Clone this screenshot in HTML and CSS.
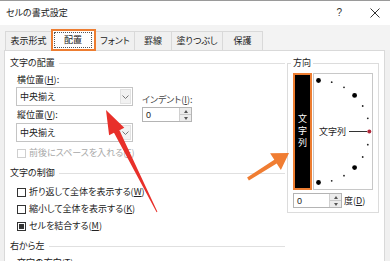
FILE: index.html
```html
<!DOCTYPE html>
<html lang="ja">
<head>
<meta charset="utf-8">
<title>セルの書式設定</title>
<link rel="stylesheet" href="styles.css">
</head>
<body>
<div class="dialog">
  <div class="titlebar">
    <span class="title">セルの書式設定</span>
    <div class="tb-btns">
      <span class="help">?</span>
      <svg class="close" width="10" height="10" viewBox="0 0 10 10"><path d="M0.5 0.5L9.5 9.5M9.5 0.5L0.5 9.5" stroke="#333" stroke-width="1" fill="none"/></svg>
    </div>
  </div>
  <div class="tabs">
    <div class="tab t1">表示形式</div>
    <div class="tab sel"><span class="focus">配置</span></div>
    <div class="tab t3">フォント</div>
    <div class="tab t4">罫線</div>
    <div class="tab t5">塗りつぶし</div>
    <div class="tab t6">保護</div>
  </div>
  <div class="panel">
    <div class="left">
      <div class="group-h g1"><span>文字の配置</span></div>
      <div class="align-row">
        <div class="combos">
          <div class="lbl">横位置(<u>H</u>):</div>
          <div class="combo c1"><span class="val">中央揃え</span><span class="dd"><svg width="7" height="4" viewBox="0 0 7 4"><path d="M0.5 0.5L3.5 3.5L6.5 0.5" stroke="#777" fill="none"/></svg></span></div>
          <div class="lbl l2">縦位置(<u>V</u>):</div>
          <div class="combo c2"><span class="val">中央揃え</span><span class="dd"><svg width="7" height="4" viewBox="0 0 7 4"><path d="M0.5 0.5L3.5 3.5L6.5 0.5" stroke="#777" fill="none"/></svg></span></div>
        </div>
        <div class="indent">
          <div class="ilbl">インデント(<u>I</u>):</div>
          <div class="spin ispin"><span class="sv">0</span><span class="sb"><span class="up"></span><span class="dn"></span></span></div>
        </div>
      </div>
      <div class="cb dis"><span class="box"></span><span>前後にスペースを入れる(<u>E</u>)</span></div>
      <div class="group-h g2"><span>文字の制御</span></div>
      <div class="cb cb1"><span class="box"></span><span>折り返して全体を表示する(<u>W</u>)</span></div>
      <div class="cb cb2"><span class="box"></span><span>縮小して全体を表示する(<u>K</u>)</span></div>
      <div class="cb cb3"><span class="box checked"></span><span>セルを結合する(<u>M</u>)</span></div>
      <div class="group-h g3"><span>右から左</span></div>
      <div class="lbl last">文字の方向(<u>T</u>):</div>
    </div>
    <fieldset class="orient">
      <legend>方向</legend>
      <div class="orow">
        <div class="vtext"><span>文字列</span></div>
        <div class="dial">
          <svg width="58" height="115" viewBox="0 0 58 115">
            <circle cx="4.5" cy="6.5" r="2.4" fill="#000"/>
            <circle cx="17.7" cy="8.2" r="0.9" fill="#222"/>
            <circle cx="30" cy="13.3" r="0.9" fill="#222"/>
            <circle cx="40.6" cy="21.4" r="2.4" fill="#000"/>
            <circle cx="48.7" cy="32" r="0.9" fill="#222"/>
            <circle cx="53.8" cy="44.3" r="0.9" fill="#222"/>
            <line x1="35" y1="57.5" x2="53" y2="57.5" stroke="#333" stroke-width="1"/>
            <circle cx="55.3" cy="57.5" r="2" fill="#b0283a"/>
            <circle cx="53.8" cy="70.7" r="0.9" fill="#222"/>
            <circle cx="48.7" cy="83" r="0.9" fill="#222"/>
            <circle cx="40.6" cy="93.6" r="2.4" fill="#000"/>
            <circle cx="30" cy="101.7" r="0.9" fill="#222"/>
            <circle cx="17.7" cy="106.8" r="0.9" fill="#222"/>
            <circle cx="4.5" cy="108.5" r="2.4" fill="#000"/>
            <text x="5" y="60.8" class="dtext">文字列</text>
          </svg>
        </div>
      </div>
      <div class="drow">
        <div class="spin dspin"><span class="sv">0</span><span class="sb"><span class="up"></span><span class="dn"></span></span></div>
        <span class="deg">度(<u>D</u>)</span>
      </div>
    </fieldset>
  </div>
</div>
<svg class="annot" width="390" height="261" viewBox="0 0 390 261">
  <polygon fill="#e8302a" points="106,110 124.3,127.7 119.4,130.2 157.4,211.8 156.6,212.2 114.0,132.8 109.1,135.3"/>
  <polygon fill="#f07d32" points="289,153 280.9,170.1 276.7,163.5 248.9,180.4 247.1,177.6 274.3,159.7 270.1,153.2"/>
</svg>
</body>
</html>
```

FILE: styles.css
```css
* { box-sizing: border-box; }
html, body { margin: 0; padding: 0; }
body {
  position: relative;
  width: 390px;
  height: 261px;
  overflow: hidden;
  background: #fff;
  font-family: "Noto Sans CJK JP", "Noto Sans", sans-serif;
  font-size: 9px;
  line-height: 12px;
  color: #222;
  font-feature-settings: "palt" 1;
}
u { text-decoration: underline; text-underline-offset: 1px; }

.dialog {
  width: 390px;
  height: 261px;
  background: #f0f0f0;
  border-top: 1px solid #9a9a9a;
}

.titlebar {
  height: 24px;
  background: #fff;
  display: flex;
  align-items: center;
  justify-content: space-between;
  padding: 0 10px 0 6px;
}
.title { font-size: 9px; }
.tb-btns { display: flex; align-items: center; gap: 28px; }
.help { font-family: "Liberation Sans", sans-serif; font-size: 10px; color: #333; }
.close { display: block; }

.tabs {
  height: 25px;
  display: flex;
  align-items: flex-end;
  padding-left: 5px;
  background: #f3f3f3;
}
.tab {
  height: 19px;
  display: flex;
  align-items: center;
  justify-content: center;
  border: 1px solid #d9d9d9;
  border-bottom: none;
  margin-right: -1px;
  background: #f0f0f0;
}
.t1 { width: 47px; }
.t3 { width: 40px; }
.t4 { width: 38px; }
.t5 { width: 52px; }
.t6 { width: 41px; }
.tab.sel {
  width: 45px;
  height: 22px;
  margin-bottom: -1px;
  padding: 1px 2px 1px 1px;
  border: 2px solid #ed7d31;
  background: #fff;
  position: relative;
  z-index: 1;
}
.focus {
  flex: 1;
  align-self: stretch;
  display: flex;
  align-items: center;
  justify-content: center;
  border: 1px dotted #555;
}

.panel {
  display: flex;
  margin-left: 4px;
  width: 381px;
  height: 212px;
  background: #fff;
  border: 1px solid #d9d9d9;
}
.left { width: 282px; padding-right: 2px; }

.group-h {
  display: flex;
  align-items: center;
  gap: 4px;
  padding-left: 5px;
  height: 12px;
}
.group-h::after {
  content: "";
  flex: 1;
  height: 1px;
  background: #e0e0e0;
}
.g1 { margin-top: 6px; }
.g2 { margin-top: 8px; }
.g3 { margin-top: 8px; }

.align-row { display: flex; margin-top: 5px; }
.combos { width: 128px; padding-left: 11px; }
.lbl { padding-left: 12px; height: 12px; }
.combos .lbl { padding-left: 1px; }
.l2 { margin-top: 3px; }
.combo {
  display: flex;
  width: 117px;
  height: 19px;
  margin-top: 1px;
  border: 1px solid #c4c4c4;
  background: #fff;
}
.c2 { margin-top: 2px; }
.val { flex: 1; padding-left: 3px; display: flex; align-items: center; }
.dd {
  width: 11px;
  margin: 1px;
  background: #f2f2f2;
  border: 1px solid #e2e2e2;
  display: flex;
  align-items: center;
  justify-content: center;
}
.dd svg { display: block; }

.indent { margin-left: 9px; padding-top: 20px; }
.ilbl { color: #444; height: 12px; }

.spin {
  display: flex;
  height: 15px;
  border: 1px solid #b4b4b4;
  background: #fff;
}
.ispin { width: 50px; margin-top: 1px; }
.sv { flex: 1; padding-left: 3px; display: flex; align-items: center; font-family: "Liberation Sans", sans-serif; font-size: 9px; }
.sb {
  width: 12px;
  display: flex;
  flex-direction: column;
  background: #ececec;
  border-left: 1px solid #d0d0d0;
}
.sb .up, .sb .dn {
  flex: 1;
  display: flex;
  align-items: center;
  justify-content: center;
}
.sb .up { border-bottom: 1px solid #c8c8c8; }
.sb .up::before {
  content: "";
  border-left: 2.5px solid transparent;
  border-right: 2.5px solid transparent;
  border-bottom: 3px solid #555;
}
.sb .dn::before {
  content: "";
  border-left: 2.5px solid transparent;
  border-right: 2.5px solid transparent;
  border-top: 3px solid #555;
}

.cb {
  display: flex;
  align-items: center;
  gap: 3px;
  padding-left: 12px;
  height: 12px;
}
.box {
  width: 9px;
  height: 9px;
  border: 1px solid #333;
  background: #fff;
  display: flex;
  align-items: center;
  justify-content: center;
}
.box.checked::before {
  content: "";
  width: 5px;
  height: 5px;
  background: #333;
}
.dis { margin-top: 5px; color: #a8a8a8; }
.dis .box { border-color: #cfcfcf; }
.cb1 { margin-top: 7px; }
.cb2 { margin-top: 5px; }
.cb3 { margin-top: 5px; }
.last { margin-top: 5px; }

.orient {
  margin: 6px 0 0 0;
  padding: 4px 5px 4px 5px;
  width: 92px;
  height: 156px;
  border: 1px solid #dcdcdc;
  min-width: 0;
}
.orient legend {
  padding: 0 2px;
  margin-left: -2px;
  line-height: 12px;
}
.orow { display: flex; gap: 1px; height: 117px; }
.vtext {
  width: 19px;
  background: #000;
  border: 2px solid #ed7d31;
  color: #fff;
  display: flex;
  align-items: center;
  justify-content: center;
}
.vtext span {
  writing-mode: vertical-rl;
  letter-spacing: 3px;
  line-height: 9px;
}
.dial {
  width: 60px;
  border: 1px solid #c8c8c8;
  background: #fff;
}
.dial svg { display: block; }
.dtext { font-family: "Noto Sans CJK JP", sans-serif; font-size: 9px; fill: #222; }

.drow { display: flex; align-items: center; margin-top: 3px; }
.dspin { width: 49px; }
.deg { margin-left: 2px; }

.annot {
  position: absolute;
  top: 0;
  left: 0;
  pointer-events: none;
}
```
